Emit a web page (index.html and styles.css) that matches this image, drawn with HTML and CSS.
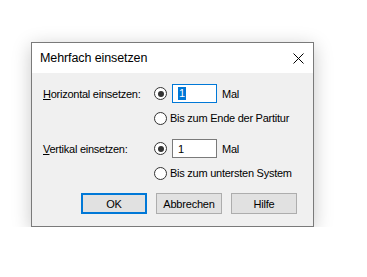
FILE: index.html
```html
<!DOCTYPE html>
<html lang="de">
<head>
    <meta charset="UTF-8">
    <title>Mehrfach einsetzen</title>
    <link rel="stylesheet" href="styles.css">
</head>
<body>
    <div class="dialog">
        <div class="titlebar">
            <span class="title">Mehrfach einsetzen</span>
            <svg class="close" width="11" height="11" viewBox="0 0 11 11">
                <path d="M0.5 0.5 L10.5 10.5 M10.5 0.5 L0.5 10.5" stroke="#000" stroke-width="1" fill="none"/>
            </svg>
        </div>
        <div class="content">
            <div class="row row-input">
                <span class="label"><u>H</u>orizontal einsetzen:</span>
                <span class="radio checked"></span>
                <div class="field focused"><span class="sel">1</span></div>
                <span class="unit">Mal</span>
            </div>
            <div class="row row-radio">
                <span class="radio"></span>
                <span class="option">Bis zum Ende der Partitur</span>
            </div>
            <div class="row row-input second">
                <span class="label"><u>V</u>ertikal einsetzen:</span>
                <span class="radio checked"></span>
                <div class="field">1</div>
                <span class="unit">Mal</span>
            </div>
            <div class="row row-radio">
                <span class="radio"></span>
                <span class="option">Bis zum untersten System</span>
            </div>
            <div class="buttons">
                <button class="default">OK</button>
                <button>Abbrechen</button>
                <button>Hilfe</button>
            </div>
        </div>
    </div>
</body>
</html>
```

FILE: styles.css
```css
* {
    margin: 0;
    padding: 0;
    box-sizing: border-box;
    font-family: 'Liberation Sans', Arial, sans-serif;
}

body {
    background: white;
    padding: 42px 0 0 31px;
}

.dialog {
    width: 283px;
    height: 185px;
    border: 1px solid #7a7a7a;
    background: #f0f0f0;
    box-shadow: 0 4px 18px rgba(0,0,0,0.22);
    display: flex;
    flex-direction: column;
}

.titlebar {
    height: 30px;
    background: white;
    display: flex;
    align-items: center;
    justify-content: space-between;
    padding: 0 9px 0 8px;
}

.title {
    font-size: 12.5px;
    letter-spacing: -0.1px;
    color: #000;
}

.close {
    display: block;
}

.content {
    flex: 1;
    padding: 11px 0 0 11px;
    display: flex;
    flex-direction: column;
    font-size: 11px;
    letter-spacing: -0.25px;
    color: #000;
    white-space: nowrap;
}

.row {
    display: flex;
    align-items: center;
}

.row-input {
    height: 19px;
}

.row-input.second {
    margin-top: 14px;
}

.row-radio {
    height: 14px;
    margin-top: 8px;
    padding-left: 111px;
}

.label {
    width: 111px;
}

.radio {
    width: 13px;
    height: 13px;
    border: 1px solid #333;
    border-radius: 50%;
    background: white;
    display: flex;
    align-items: center;
    justify-content: center;
    flex-shrink: 0;
}

.radio.checked::after {
    content: "";
    width: 6px;
    height: 6px;
    border-radius: 50%;
    background: #333;
}

.option {
    margin-left: 3px;
}

.field {
    width: 45px;
    height: 19px;
    margin-left: 5px;
    border: 1px solid #7a7a7a;
    background: white;
    padding-left: 5px;
    display: flex;
    align-items: center;
}

.field.focused {
    border-color: #0078d7;
}

.sel {
    background: #0078d7;
    color: white;
    line-height: 13px;
    padding: 0 1px;
}

.unit {
    margin-left: 5px;
}

.buttons {
    display: flex;
    gap: 9px;
    margin-top: 13px;
    padding-left: 38px;
}

button {
    width: 66px;
    height: 21px;
    background: #e1e1e1;
    border: 1px solid #adadad;
    font-size: 11px;
    letter-spacing: -0.2px;
    color: #000;
}

button.default {
    border: 2px solid #0078d7;
}
```
